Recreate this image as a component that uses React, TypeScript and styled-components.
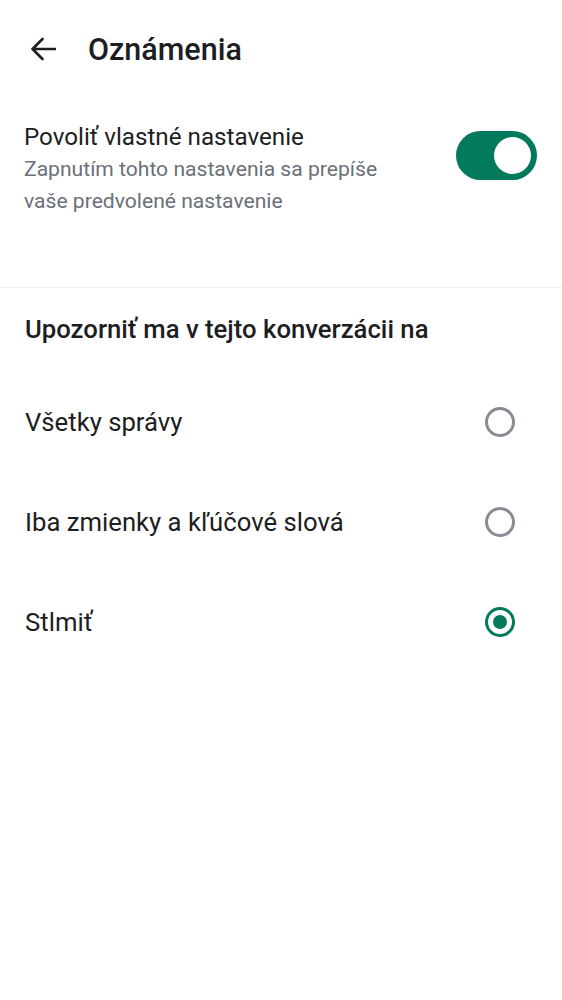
import styled, { createGlobalStyle } from 'styled-components';
import { useState } from 'react';

const GlobalStyle = createGlobalStyle`
  html, body {
    margin: 0;
    padding: 0;
    background: #ffffff;
    font-family: Roboto, 'Noto Sans', sans-serif;
    color: #1d1e22;
  }
`;

const options = [
  'Všetky správy',
  'Iba zmienky a kľúčové slová',
  'Stlmiť',
];

const App: React.FC = () => {
  const [enabled, setEnabled] = useState(true);
  const [selected, setSelected] = useState(2);
  return (
    <Page>
      <GlobalStyle />
      <Header>
        <BackButton aria-label='Späť'>
          <svg width='26' height='24' viewBox='0 0 26 24' fill='none'>
            <path
              d='M25 12H2.5M12.5 2L2.5 12L12.5 22'
              stroke='#1d1e22'
              strokeWidth='2.6'
              strokeLinecap='round'
              strokeLinejoin='round'
            />
          </svg>
        </BackButton>
        <Title>Oznámenia</Title>
      </Header>

      <SettingRow>
        <SettingText>
          <SettingTitle>Povoliť vlastné nastavenie</SettingTitle>
          <SettingHint>
            Zapnutím tohto nastavenia sa prepíše vaše predvolené nastavenie
          </SettingHint>
        </SettingText>
        <Toggle $on={enabled} onClick={() => setEnabled(!enabled)}>
          <Knob $on={enabled} />
        </Toggle>
      </SettingRow>

      <Divider />

      <Section>
        <SectionTitle>Upozorniť ma v tejto konverzácii na</SectionTitle>
        <OptionList>
          {options.map((label, idx) => (
            <OptionRow key={label} onClick={() => setSelected(idx)}>
              <OptionLabel>{label}</OptionLabel>
              <Radio $checked={selected === idx} />
            </OptionRow>
          ))}
        </OptionList>
      </Section>
    </Page>
  );
};
export default App;

const Page = styled.div`
  width: 562px;
  min-height: 1000px;
  background: #ffffff;
`;

const Header = styled.div`
  height: 98px;
  display: flex;
  align-items: center;
  padding: 0 0 0 30px;
  gap: 32px;
`;

const BackButton = styled.button`
  border: none;
  background: none;
  padding: 0;
  width: 26px;
  height: 24px;
  display: flex;
  align-items: center;
  justify-content: center;
  cursor: pointer;
`;

const Title = styled.h1`
  margin: 0;
  font-size: 30.5px;
  font-weight: 500;
  color: #1d1e22;
`;

const SettingRow = styled.div`
  display: flex;
  align-items: flex-start;
  justify-content: space-between;
  padding: 23px 25px 70px 24px;
`;

const SettingText = styled.div`
  display: flex;
  flex-direction: column;
  width: 400px;
`;

const SettingTitle = styled.div`
  font-size: 24.2px;
  line-height: 32px;
  color: #1d1e22;
`;

const SettingHint = styled.div`
  font-size: 21.1px;
  line-height: 32px;
  color: #6b7079;
`;

const Toggle = styled.div<{ $on: boolean }>`
  margin-top: 10px;
  width: 81px;
  height: 49px;
  border-radius: 25px;
  background: ${(p) => (p.$on ? '#047a5c' : '#c4c7ce')};
  display: flex;
  align-items: center;
  justify-content: ${(p) => (p.$on ? 'flex-end' : 'flex-start')};
  padding: 0 6px;
  box-sizing: border-box;
  cursor: pointer;
`;

const Knob = styled.div<{ $on: boolean }>`
  width: 37px;
  height: 37px;
  border-radius: 50%;
  background: #ffffff;
`;

const Divider = styled.div`
  height: 1px;
  background: #efeff3;
`;

const Section = styled.div`
  padding: 25px 0 0 0;
`;

const SectionTitle = styled.div`
  padding: 0 25px;
  font-size: 25.7px;
  font-weight: 500;
  line-height: 32px;
  color: #1d1e22;
`;

const OptionList = styled.div`
  margin-top: 27px;
  display: flex;
  flex-direction: column;
`;

const OptionRow = styled.div`
  height: 100px;
  display: flex;
  align-items: center;
  justify-content: space-between;
  padding: 0 47px 0 25px;
  cursor: pointer;
`;

const OptionLabel = styled.div`
  font-size: 25.7px;
  color: #1d1e22;
`;

const Radio = styled.div<{ $checked: boolean }>`
  width: 30px;
  height: 30px;
  box-sizing: border-box;
  border-radius: 50%;
  border: 3px solid ${(p) => (p.$checked ? '#047a5c' : '#868b94')};
  display: flex;
  align-items: center;
  justify-content: center;

  &::after {
    content: '';
    width: 14px;
    height: 14px;
    border-radius: 50%;
    background: #047a5c;
    display: ${(p) => (p.$checked ? 'block' : 'none')};
  }
`;
